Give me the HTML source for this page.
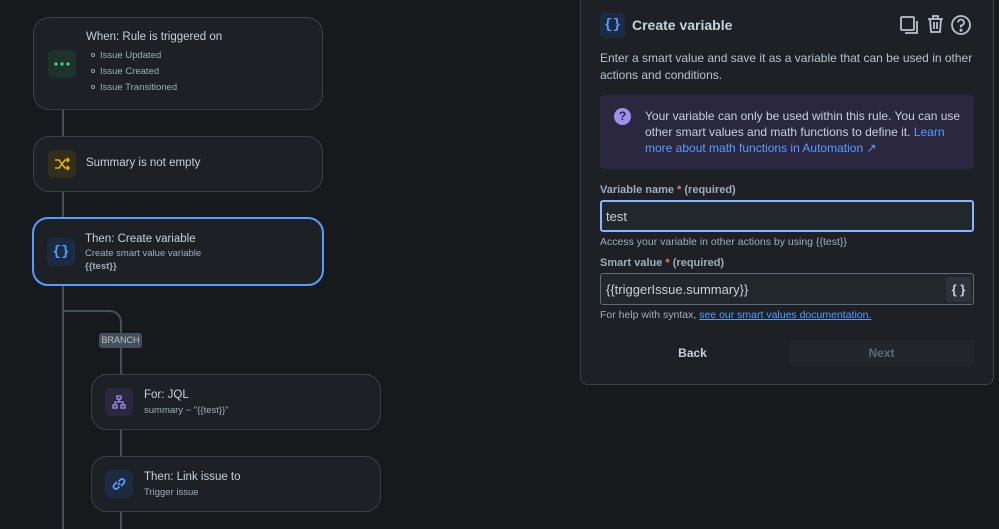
<!DOCTYPE html>
<html><head><style>
*{box-sizing:border-box;margin:0;padding:0}
body{width:999px;height:529px;background:#161a1d;font-family:"Liberation Sans",sans-serif;color:#c7d1db;position:relative;overflow:hidden}
.a{position:absolute}
.card{position:absolute;background:#1d2125;border:1px solid #3b4148;border-radius:16px}
.ic{position:absolute;width:28px;height:28px;border-radius:6px;display:flex;align-items:center;justify-content:center}
.t{position:absolute;font-size:11.5px;color:#c7d1db;white-space:nowrap}
.s{position:absolute;font-size:9.5px;color:#9fadbc;white-space:nowrap}
.line{position:absolute;background:#454f59}
</style></head><body>
<div class="line" style="left:62px;top:108px;width:2px;height:421px"></div>
<div class="a" style="left:62px;top:310px;width:60px;height:40px;border-top:2px solid #454f59;border-right:2px solid #454f59;border-top-right-radius:12px"></div>
<div class="line" style="left:120px;top:340px;width:2px;height:189px"></div>

<div class="card" style="left:33px;top:17px;width:290px;height:93px">
 <div class="ic" style="left:14px;top:32px;background:#1c3329"><svg width="16" height="4"><circle cx="2" cy="2" r="1.6" fill="#4bce97"/><circle cx="8" cy="2" r="1.6" fill="#4bce97"/><circle cx="14" cy="2" r="1.6" fill="#4bce97"/></svg></div>
 <div class="t" style="left:52px;top:13px">When: Rule is triggered on</div>
 <div class="s" style="left:66px;top:32px">Issue Updated</div>
 <div class="s" style="left:66px;top:48px">Issue Created</div>
 <div class="s" style="left:66px;top:64px">Issue Transitioned</div>
 <div class="a" style="left:57px;top:35px;width:4px;height:4px;border:1px solid #8c9bab;border-radius:50%"></div>
 <div class="a" style="left:57px;top:51px;width:4px;height:4px;border:1px solid #8c9bab;border-radius:50%"></div>
 <div class="a" style="left:57px;top:67px;width:4px;height:4px;border:1px solid #8c9bab;border-radius:50%"></div>
</div>

<div class="card" style="left:33px;top:136px;width:290px;height:56px">
 <div class="ic" style="left:14px;top:13px;background:#332e1b"><svg width="16" height="14" fill="none" stroke="#e2b203" stroke-width="1.6"><path d="M1 3h4l6 8h4M1 11h4l6-8h4M13 1l2 2-2 2M13 9l2 2-2 2"/></svg></div>
 <div class="t" style="left:52px;top:20px">Summary is not empty</div>
</div>

<div class="card" style="left:32px;top:217px;width:292px;height:69px;border:2px solid #579dff">
 <div class="ic" style="left:13px;top:19px;background:#1c2b41;color:#579dff;font-size:14px;font-weight:bold;font-family:'Liberation Mono',monospace">{}</div>
 <div class="t" style="left:51px;top:14px">Then: Create variable</div>
 <div class="s" style="left:51px;top:29px">Create smart value variable</div>
 <div class="s" style="left:51px;top:42px;font-weight:bold">{{test}}</div>
</div>

<div class="a" style="left:99px;top:333px;width:43px;height:15px;background:#454f59;border-radius:3px;font-size:9px;color:#b6c2cf;text-align:center;line-height:15px">BRANCH</div>

<div class="card" style="left:91px;top:374px;width:290px;height:56px">
 <div class="ic" style="left:13px;top:13px;background:#2b273f"><svg width="14" height="14" fill="none" stroke="#9f8fef" stroke-width="1.3"><rect x="5" y="1" width="4" height="3"/><rect x="1" y="10" width="4" height="3"/><rect x="9" y="10" width="4" height="3"/><path d="M7 4v3M3 10V7h8v3"/></svg></div>
 <div class="t" style="left:52px;top:14px">For: JQL</div>
 <div class="s" style="left:52px;top:30px">summary ~ "{{test}}"</div>
</div>

<div class="card" style="left:91px;top:456px;width:290px;height:56px">
 <div class="ic" style="left:13px;top:13px;background:#1c2b41"><svg width="16" height="16" fill="none" stroke="#579dff" stroke-width="1.8"><path d="M7 9l2-2M6 6l-3 3a2.5 2.5 0 0 0 3.5 3.5l2-2M10 10l3-3a2.5 2.5 0 0 0-3.5-3.5l-2 2"/></svg></div>
 <div class="t" style="left:52px;top:14px">Then: Link issue to</div>
 <div class="s" style="left:52px;top:30px">Trigger issue</div>
</div>

<!-- panel -->
<div class="a" style="left:580px;top:-10px;width:414px;height:395px;background:#1d2125;border:1px solid #3b4148;border-radius:8px"></div>
<div class="a" style="left:600px;top:13px;width:25px;height:25px;background:#1c2b41;border-radius:5px;color:#579dff;font-family:'Liberation Mono',monospace;font-weight:bold;font-size:14px;text-align:center;line-height:25px">{}</div>
<div class="a" style="left:632px;top:17px;font-size:14px;font-weight:bold;color:#c7d1db">Create variable</div>
<svg class="a" style="left:899px;top:15px" width="20" height="20" fill="none" stroke="#b6c2cf" stroke-width="1.8"><rect x="2" y="2" width="13" height="13" rx="1"/><path d="M18 6v12H6"/></svg>
<svg class="a" style="left:926px;top:14px" width="19" height="20" fill="none" stroke="#b6c2cf" stroke-width="1.8"><path d="M2 5h15M7 5V2h5v3M4 5l1 13h9l1-13M8 8v7M11 8v7"/></svg>
<svg class="a" style="left:950px;top:14px" width="22" height="22" fill="none" stroke="#b6c2cf" stroke-width="1.8"><circle cx="11" cy="11" r="9"/><path d="M8 8.5a3 3 0 1 1 3 3v2"/><circle cx="11" cy="16.2" r=".6" fill="#b6c2cf"/></svg>
<div class="a" style="left:600px;top:50px;width:380px;font-size:12px;line-height:16.5px;color:#b6c2cf">Enter a smart value and save it as a variable that can be used in other actions and conditions.</div>
<div class="a" style="left:600px;top:95px;width:374px;height:74px;background:#2b273f;border-radius:3px"></div>
<div class="a" style="left:614px;top:108px;width:17px;height:17px;background:#9f8fef;border-radius:50%;color:#2b273f;font-size:12px;font-weight:bold;text-align:center;line-height:17px">?</div>
<div class="a" style="left:645px;top:108px;width:320px;font-size:12px;line-height:16px;color:#c7d1db">Your variable can only be used within this rule. You can use other smart values and math functions to define it. <span style="color:#579dff">Learn more about math functions in Automation ↗</span></div>
<div class="a" style="left:600px;top:184px;font-size:11px;font-weight:bold;color:#9fadbc">Variable name <span style="color:#f87168">*</span> (required)</div>
<div class="a" style="left:600px;top:200px;width:374px;height:32px;border:2px solid #85b8ff;border-radius:3px;background:#22272b;font-size:13px;color:#c7d1db;padding:7px 4px">test</div>
<div class="a" style="left:600px;top:236px;font-size:10.5px;color:#9fadbc">Access your variable in other actions by using {{test}}</div>
<div class="a" style="left:600px;top:257px;font-size:11px;font-weight:bold;color:#9fadbc">Smart value <span style="color:#f87168">*</span> (required)</div>
<div class="a" style="left:600px;top:273px;width:374px;height:32px;border:1px solid #5e6a76;border-radius:3px;background:#22272b;font-size:13px;color:#c7d1db;padding:8px 5px">{{triggerIssue.summary}}</div>
<div class="a" style="left:946px;top:277px;width:25px;height:25px;background:#2c333a;border-radius:3px;color:#c7d1db;font-size:13px;text-align:center;line-height:25px;font-weight:bold">{ }</div>
<div class="a" style="left:600px;top:309px;font-size:10.5px;color:#9fadbc">For help with syntax, <span style="color:#579dff;text-decoration:underline">see our smart values documentation.</span></div>
<div class="a" style="left:600px;top:340px;width:185px;height:26px;font-size:12px;font-weight:bold;color:#c7d1db;text-align:center;line-height:26px">Back</div>
<div class="a" style="left:789px;top:340px;width:185px;height:26px;background:#22262a;border-radius:3px;font-size:12px;font-weight:bold;color:#5e6a76;text-align:center;line-height:26px">Next</div>
</body></html>
